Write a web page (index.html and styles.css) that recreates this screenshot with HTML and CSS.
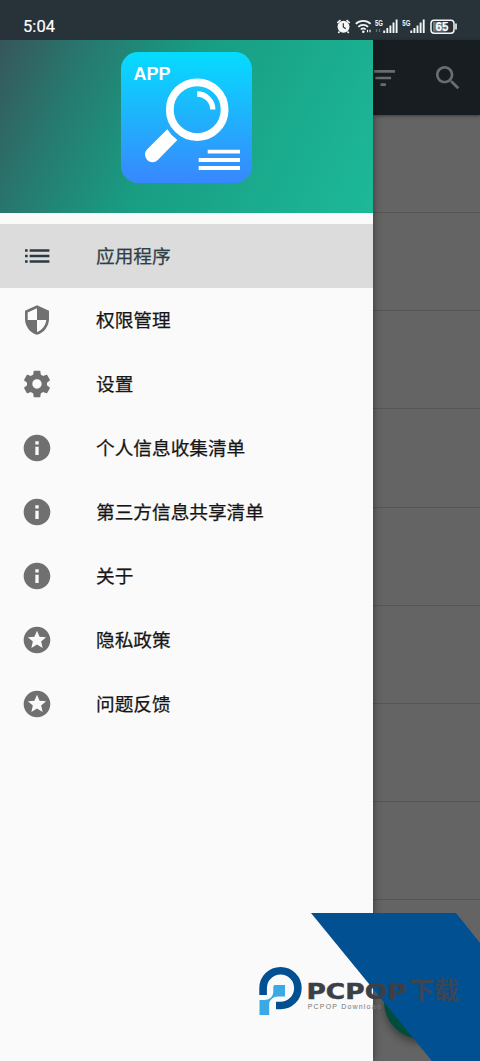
FILE: index.html
```html
<!DOCTYPE html>
<html lang="zh-CN">
<head>
<meta charset="utf-8">
<title>应用程序</title>
<link rel="stylesheet" href="styles.css">
</head>
<body>
<svg class="defs" width="0" height="0">
  <symbol id="info" viewBox="0 0 24 24"><path d="M12 2C6.480 2 2 6.480 2 12s4.480 10 10 10 10-4.480 10-10S17.520 2 12 2zm1.250 15.200h-2.500v-6.200h2.500v6.200zm0-7.900h-2.500V6.900h2.500v2.400z"/></symbol>
  <symbol id="star" viewBox="0 0 24 24"><path d="M11.990 2C6.470 2 2 6.480 2 12s4.470 10 9.990 10C17.520 22 22 17.520 22 12S17.520 2 11.990 2zm4.240 16L12 15.450 7.770 18l1.120-4.810-3.730-3.230 4.920-.42L12 5l1.920 4.530 4.920.42-3.730 3.230L16.230 18z"/></symbol>
</svg>
<div class="screen">
  <header class="status">
    <span class="time">5:04</span>
    <svg class="status-icons" viewBox="334 14 126 24" width="126" height="24" fill="none" stroke="#f4f6f7">
      <circle cx="343.500" cy="26.700" r="6" fill="#f4f6f7" stroke="none"/>
      <path d="M337.300 22.800l3.200-2.700M349.700 22.800l-3.200-2.700M339.500 31.500l-1.200 1.500M347.500 31.500l1.200 1.500" stroke-width="1.600"/>
      <path d="M343.300 23.300v3.600l2.400 1.800" stroke="#273239" stroke-width="1.200"/>
      <path d="M355.800 23.900a10.500 10.500 0 0 1 14.800 0M358.300 26.800a7 7 0 0 1 9.800 0M360.800 29.500a3.500 3.500 0 0 1 4.900 0" stroke-width="1.700"/>
      <circle cx="363.300" cy="31.700" r="1.300" fill="#f4f6f7" stroke="none"/>
      <path d="M367.500 29.700v2.600M370 29.700v2.600" stroke-width="1.200"/>
      <text class="net" x="375" y="25.800" textLength="8" lengthAdjust="spacingAndGlyphs">5G</text>
      <path d="M376.500 29v3M379.500 29v3" stroke="#65727a" stroke-width="1.200"/>
      <path d="M384.200 33v-2.500M387.300 33v-5M390.400 33v-7.500M393.500 33v-10.500M396.600 33v-13.500" stroke-width="1.900"/>
      <text class="net" x="402.300" y="25.800" textLength="8" lengthAdjust="spacingAndGlyphs">5G</text>
      <path d="M411.300 33v-2.500M414.400 33v-5M417.500 33v-7.500M420.600 33v-10.500M423.700 33v-13.500" stroke-width="1.900"/>
      <rect x="431" y="20.300" width="23" height="13" rx="3.200" stroke-width="1.500"/>
      <path d="M433 22h13v9.600h-13z" fill="#6f797e" stroke="none"/>
      <path d="M456 23.500v6" stroke-width="1.600"/>
      <text class="battery" x="435.500" y="31.200" textLength="13" lengthAdjust="spacingAndGlyphs">65</text>
    </svg>
  </header>
  <div class="body">
    <nav class="drawer">
      <div class="banner">
        <svg viewBox="121 52 131 131" width="131" height="131">
          <defs>
            <linearGradient id="sky" x1="0" y1="0" x2="0" y2="1"><stop offset="0" stop-color="#05dcff"/><stop offset=".5" stop-color="#1fb2fc"/><stop offset="1" stop-color="#3987fe"/></linearGradient>
          </defs>
          <rect x="121" y="52" width="131" height="131" rx="17" fill="url(#sky)"/>
          <text class="app-word" x="133.500" y="80" textLength="37" lengthAdjust="spacingAndGlyphs">APP</text>
          <circle cx="197.200" cy="109.700" r="27.400" fill="none" stroke="#fff" stroke-width="7.800"/>
          <path d="M197.200 94a15.600 15.600 0 0 1 15.600 15.600" fill="none" stroke="#fff" stroke-width="5.300"/>
          <path d="M167.300 129.300L147.200 149.300A7.500 7.500 0 0 0 157.800 160L177.300 140A35 35 0 0 1 167.300 129.300z" fill="#fff"/>
          <path d="M207.700 149.700H240v3.800h-32.300zM198.700 157.900H240v4h-41.300zM198.700 166H240v4h-41.300z" fill="#fff"/>
        </svg>
      </div>
      <ul class="menu">
        <li class="item active"><svg class="icon" viewBox="0 0 24 24"><path d="M3 8.900h2V6.900H3v2zM3 13h2V11H3v2zM3 17.100h2v-2H3v2zM6.500 6.900v2H21.300v-2H6.500zM6.500 13H21.300V11H6.500v2zM6.500 17.100H21.300v-2H6.500v2z"/></svg><span>应用程序</span></li>
        <li class="item"><svg class="icon" viewBox="0 0 24 24"><path d="M12 1L3 5v6c0 5.550 3.840 10.740 9 12 5.160-1.260 9-6.450 9-12V5l-9-4zm0 10.990h7c-.53 4.120-3.280 7.790-7 8.940V12H5V6.300l7-3.110v8.800z"/></svg><span>权限管理</span></li>
        <li class="item"><svg class="icon" viewBox="0 0 24 24"><path d="M19.430 12.980c.04-.32.07-.64.07-.98s-.03-.66-.07-.98l2.110-1.650c.19-.15.24-.42.12-.64l-2-3.460c-.12-.22-.39-.3-.61-.22l-2.490 1c-.52-.4-1.080-.73-1.690-.98l-.38-2.650C14.460 2.180 14.250 2 14 2h-4c-.25 0-.46.18-.49.42l-.38 2.650c-.61.25-1.170.59-1.690.98l-2.490-1c-.23-.09-.49 0-.61.22l-2 3.460c-.13.22-.07.49.12.64l2.110 1.650c-.04.32-.07.65-.07.98s.03.66.07.98l-2.110 1.650c-.19.15-.24.42-.12.64l2 3.460c.12.22.39.3.61.22l2.490-1c.52.4 1.080.73 1.690.98l.38 2.650c.03.24.24.42.49.42h4c.25 0 .46-.18.49-.42l.38-2.650c.61-.25 1.170-.59 1.690-.98l2.490 1c.23.09.49 0 .61-.22l2-3.460c.12-.22.07-.49-.12-.64l-2.110-1.650zM12 15.500c-1.930 0-3.500-1.570-3.500-3.500s1.570-3.500 3.500-3.500 3.500 1.570 3.500 3.500-1.570 3.500-3.500 3.500z"/></svg><span>设置</span></li>
        <li class="item"><svg class="icon"><use href="#info"/></svg><span>个人信息收集清单</span></li>
        <li class="item"><svg class="icon"><use href="#info"/></svg><span>第三方信息共享清单</span></li>
        <li class="item"><svg class="icon"><use href="#info"/></svg><span>关于</span></li>
        <li class="item"><svg class="icon"><use href="#star"/></svg><span>隐私政策</span></li>
        <li class="item"><svg class="icon"><use href="#star"/></svg><span>问题反馈</span></li>
      </ul>
    </nav>
    <main class="content">
      <div class="toolbar">
        <svg class="filter" viewBox="5 0 19 24" width="25" height="32"><path d="M10 18h4v-2h-4v2zM3 6v2h18V6H3zm3 7h12v-2H6v2z"/></svg>
        <svg class="search" viewBox="0 0 24 24" width="32" height="32"><path d="M15.500 14h-.79l-.28-.27C15.410 12.590 16 11.110 16 9.500 16 5.910 13.090 3 9.500 3S3 5.910 3 9.500 5.910 16 9.500 16c1.610 0 3.090-.59 4.230-1.570l.27.28v.79l5 4.990L20.490 19l-4.990-5zm-6 0C7.010 14 5 11.990 5 9.500S7.010 5 9.500 5 14 7.010 14 9.500 11.990 14 9.500 14z"/></svg>
      </div>
      <div class="rows">
        <div class="row"></div><div class="row"></div><div class="row"></div><div class="row"></div><div class="row"></div>
        <div class="row"></div><div class="row"></div><div class="row"></div><div class="row"></div><div class="row"></div>
      </div>
    </main>
  </div>
  <div class="fab"></div>
  <svg class="watermark" viewBox="250 913 230 148" width="230" height="148">
    <path d="M311 913H456L480 943V1061H432z" fill="#005092"/>
    <path d="M263.100 995V988A17.400 17.400 0 1 1 280.500 1005.500H276" fill="none" stroke="#005092" stroke-width="7.600"/>
    <path d="M274.500 985H285V996.500H278C273 996.500 270 1000 269.200 1003V1015H259.500V1000H264.500C269 1000 273 997 273.300 992V986.500z" fill="#3ba9e3"/>
    <text class="brand" x="306.500" y="998.500" textLength="100" lengthAdjust="spacingAndGlyphs">PCPOP</text>
    <text class="brand-cn" x="409" y="998.700" textLength="50" lengthAdjust="spacingAndGlyphs">下载</text>
    <text class="brand-sub" x="307.700" y="1008.700" textLength="73" lengthAdjust="spacing">PCPOP Download</text>
  </svg>
</div>
</body>
</html>
```

FILE: styles.css
```css
* { box-sizing: border-box; }
body { margin: 0; font-family: "Noto Sans", "Noto Sans CJK SC", sans-serif; }
.defs { display: block; }
.screen {
  position: relative;
  width: 480px;
  height: 1061px;
  overflow: hidden;
  display: flex;
  flex-direction: column;
  background: #646464;
}
.status {
  flex: none;
  height: 40px;
  padding: 14px 20px 0 23px;
  display: flex;
  justify-content: space-between;
  background: #273239;
}
.time {
  font: 400 16.5px/25px Roboto, sans-serif;
  letter-spacing: 0.1px;
  color: #fff;
  -webkit-text-stroke: 0.2px #fff;
}
.net { font: bold 9px "Liberation Sans", sans-serif; fill: #f4f6f7; stroke: none; }
.battery { font: bold 12px "Liberation Sans", sans-serif; fill: #fff; stroke: none; }
.body { flex: 1; display: flex; min-height: 0; }
.drawer {
  flex: none;
  width: 373px;
  background: #fafafa;
  box-shadow: 0 0 8px rgba(0, 0, 0, 0.45);
  clip-path: inset(0 -12px 0 0);
  z-index: 1;
}
.banner {
  height: 173px;
  padding-top: 12px;
  display: flex;
  justify-content: center;
  background: linear-gradient(115deg, #37565b 0%, #27796f 20%, #189d83 45%, #1aa78a 65%, #1cb999 100%);
}
.app-word { font: bold 18.5px "Liberation Sans", sans-serif; fill: #fff; }
.menu { list-style: none; margin: 0; padding: 11px 0 0; }
.item {
  height: 64px;
  padding-left: 21px;
  display: flex;
  align-items: center;
  gap: 43px;
  font: 400 18.66px/28px "Noto Sans CJK SC", sans-serif;
  color: #161616;
  -webkit-text-stroke: 0.25px currentColor;
}
.item span { padding-bottom: 2px; }
.icon { width: 32px; height: 32px; fill: #707070; stroke: none; }
.active { background: #dcdcdc; color: #2f3f47; }
.active .icon { fill: #2b3a42; }
.content { flex: 1; display: flex; flex-direction: column; }
.toolbar {
  flex: none;
  height: 75px;
  padding: 0 16px 0 0;
  display: flex;
  align-items: center;
  justify-content: space-between;
  background: #171d21;
  box-shadow: 0 1px 3px rgba(0, 0, 0, 0.4);
  fill: #6a6d6f;
}
.filter { margin-left: 1px; }
.rows { flex: 1; overflow: hidden; }
.row { height: 98.15px; border-bottom: 1px solid #565656; }
.fab {
  position: absolute;
  left: 384px;
  top: 964px;
  width: 75px;
  height: 75px;
  border-radius: 50%;
  background: #004d3c;
  box-shadow: 0 4px 9px rgba(0, 0, 0, 0.4);
}
.watermark { position: absolute; right: 0; bottom: 0; z-index: 2; }
.brand { font: bold 22px "DejaVu Sans", sans-serif; fill: #3b4047; stroke: #3b4047; stroke-width: 0.5px; }
.brand-cn { font: bold 24px "Noto Sans CJK SC", sans-serif; fill: #3b4655; }
.brand-sub { font: 7px "Liberation Sans", sans-serif; fill: #767676; }
```
